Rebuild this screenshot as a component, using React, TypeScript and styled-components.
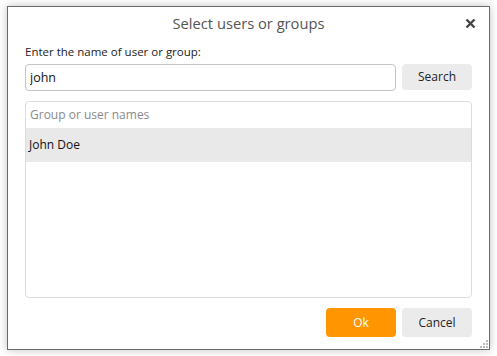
import React from "react";
import styled, { createGlobalStyle } from "styled-components";

const GlobalStyle = createGlobalStyle`
  html, body {
    margin: 0;
    padding: 0;
    background: #ffffff;
  }
  * {
    box-sizing: border-box;
  }
`;

const Page = styled.div`
  width: 497px;
  height: 356px;
  padding: 6px 0 0 7px;
  font-family: "Open Sans", "Noto Sans", sans-serif;
`;

const Dialog = styled.div`
  position: relative;
  width: 483px;
  height: 344px;
  background: #fff;
  border: 1px solid #6b6b6b;
  box-shadow: 0 0 8px rgba(0, 0, 0, 0.25);
  display: flex;
  flex-direction: column;
  padding: 0 17px 12px;
`;

const Header = styled.div`
  height: 32px;
  display: flex;
  align-items: center;
  justify-content: center;
  position: relative;
`;

const Title = styled.h1`
  margin: 0;
  font-size: 14.7px;
  font-weight: 400;
  color: #555;
`;

const CloseButton = styled.button`
  position: absolute;
  right: -6px;
  top: 8px;
  width: 16px;
  height: 16px;
  border: none;
  background: none;
  padding: 0;
  cursor: pointer;
  display: flex;
  align-items: center;
  justify-content: center;
`;

const Label = styled.label`
  font-size: 11.5px;
  color: #222;
  margin-top: 5px;
  line-height: 16px;
`;

const SearchRow = styled.div`
  display: flex;
  gap: 6px;
  margin-top: 4px;
  align-items: flex-start;
`;

const Input = styled.input`
  flex: 1;
  height: 27px;
  border: 1px solid #c4c4c4;
  border-radius: 4px;
  padding: 0 4px;
  font-family: inherit;
  font-size: 12.5px;
  color: #111;
  outline: none;
`;

const Button = styled.button<{ $primary?: boolean; $tall?: boolean }>`
  width: 70px;
  height: ${(p) => (p.$tall ? "29px" : "26px")};
  border: none;
  border-radius: 4px;
  background: ${(p) => (p.$primary ? "#ff9500" : "#ebebeb")};
  color: ${(p) => (p.$primary ? "#fff" : "#222")};
  font-family: inherit;
  font-size: 12px;
  cursor: pointer;
`;

const ListBox = styled.div`
  margin-top: 10px;
  height: 198px;
  border: 1px solid #dcdcdc;
  border-radius: 4px;
  display: flex;
  flex-direction: column;
  overflow: hidden;
`;

const ListHeader = styled.div`
  height: 26px;
  display: flex;
  align-items: center;
  padding-left: 4px;
  font-size: 12px;
  color: #8a8a8a;
`;

const ListRow = styled.div<{ $selected?: boolean }>`
  height: 34px;
  display: flex;
  align-items: center;
  padding-left: 3px;
  font-size: 12px;
  color: #111;
  background: ${(p) => (p.$selected ? "#e9e9e9" : "transparent")};
`;

const Footer = styled.div`
  display: flex;
  justify-content: flex-end;
  gap: 6px;
  margin-top: 10px;
`;

const Grip = styled.svg`
  position: absolute;
  right: 1px;
  bottom: 1px;
`;

export default function App() {
  return (
    <>
      <GlobalStyle />
      <Page>
        <Dialog>
          <Header>
            <Title>Select users or groups</Title>
            <CloseButton aria-label="Close">
              <svg width="11" height="11" viewBox="0 0 11 11">
                <path d="M1.5 1.5 L9.5 9.5 M9.5 1.5 L1.5 9.5" stroke="#444" strokeWidth="2.4" />
              </svg>
            </CloseButton>
          </Header>
          <Label>Enter the name of user or group:</Label>
          <SearchRow>
            <Input defaultValue="john" />
            <Button>Search</Button>
          </SearchRow>
          <ListBox>
            <ListHeader>Group or user names</ListHeader>
            <ListRow $selected>John Doe</ListRow>
          </ListBox>
          <Footer>
            <Button $primary $tall>Ok</Button>
            <Button $tall>Cancel</Button>
          </Footer>
          <Grip width="8" height="8" viewBox="0 0 8 8">
            <rect x="6" y="0" width="2" height="2" fill="#bbb" />
            <rect x="3" y="3" width="2" height="2" fill="#bbb" />
            <rect x="6" y="3" width="2" height="2" fill="#bbb" />
            <rect x="0" y="6" width="2" height="2" fill="#bbb" />
            <rect x="3" y="6" width="2" height="2" fill="#bbb" />
            <rect x="6" y="6" width="2" height="2" fill="#bbb" />
          </Grip>
        </Dialog>
      </Page>
    </>
  );
}
